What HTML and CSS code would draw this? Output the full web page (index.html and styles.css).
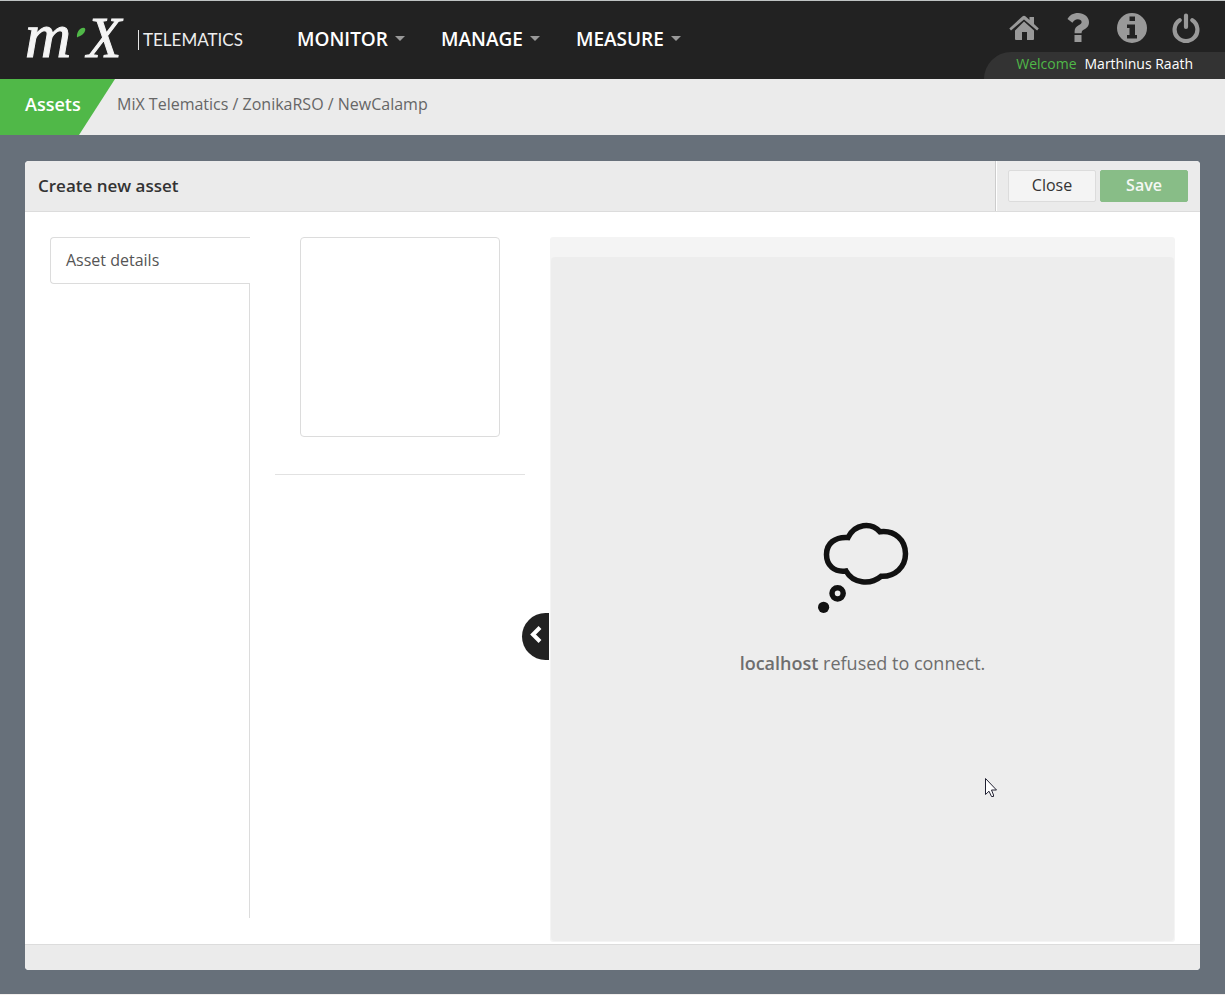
FILE: index.html
```html
<!DOCTYPE html>
<html lang="en">
<head>
<meta charset="utf-8">
<title>Create new asset</title>
<link rel="stylesheet" href="styles.css">
</head>
<body>
<header class="topbar">
  <a class="logo" href="#" aria-label="MiX Telematics">
    <svg class="logo-mark" viewBox="0 0 98 42" width="98" height="42">
      <text class="logo-m" x="0" y="38">m</text>
      <path class="logo-leaf" d="M52 18.500C51.500 14 54 9 58.500 8.800C61.500 9 60.500 13 57.500 15.500C55.500 17 53.500 17.500 52 18.500Z"/>
      <text class="logo-x" x="62" y="38">X</text>
    </svg>
    <span class="logo-name">TELEMATICS</span>
  </a>
  <nav class="menu">
    <button class="menu-item" type="button">MONITOR<span class="caret"></span></button>
    <button class="menu-item" type="button">MANAGE<span class="caret"></span></button>
    <button class="menu-item" type="button">MEASURE<span class="caret"></span></button>
  </nav>
  <div class="account">
    <div class="tools">
      <a href="#" aria-label="Home"><svg viewBox="0 0 30 30" width="30" height="30"><path d="M15 8.500L25 17.500V26q0 1-1 1h-6v-8h-5v8H7q-1 0-1-1V17.500z"/><path d="M13.300 3.600Q15 2 16.700 3.600L20.500 7V4h4.500v7l4.800 4.500-1.700 2L15 6.400 2 17.500.3 15.500z"/></svg></a>
      <a href="#" aria-label="Help"><svg viewBox="0 0 30 30" width="30" height="30"><path d="M11.500 22h7v7h-7zM4.500 6C6.500 2.200 10 0 15.200 0 20.700 0 26 3.800 26 9c0 4-2 5.900-5 7.600-1.800 1-2.400 1.700-2.400 3.600h-7v-1.600c0-3.200 1.400-4.900 4-6.300 2-1.100 3-1.700 3-3.200 0-1.900-1.800-2.800-3.800-2.800-2.600 0-3.800 1.400-5.400 3.400z"/></svg></a>
      <a href="#" aria-label="Information"><svg viewBox="0 0 30 30" width="30" height="30"><path fill-rule="evenodd" d="M15 0a15 15 0 1 1 0 30a15 15 0 0 1 0-30zM12.500 3.500v4.500h5.500v-4.500zM10 11.500v3.500h2.500v7H10V25.500h10V22h-2V11.500z"/></svg></a>
      <a href="#" aria-label="Log out"><svg viewBox="0 0 30 30" width="30" height="30"><g fill="none" stroke="currentColor" stroke-width="4.200" stroke-linecap="round"><path d="M8.700 7.200A11.400 11.400 0 1 0 21.300 7.200M15 2.500V14"/></g></svg></a>
    </div>
    <div class="welcome"><span class="greeting">Welcome</span><span>Marthinus Raath</span></div>
  </div>
</header>
<div class="crumbs">
  <h1 class="section">Assets</h1>
  <p class="path">MiX Telematics / ZonikaRSO / NewCalamp</p>
</div>
<main class="page">
  <section class="card">
    <div class="card-head">
      <h2 class="card-title">Create new asset</h2>
      <div class="actions">
        <button class="btn" type="button">Close</button>
        <button class="btn btn-save" type="button">Save</button>
      </div>
    </div>
    <div class="card-body">
      <nav class="tabs"><a class="tab" href="#">Asset details</a></nav>
      <div class="summary">
        <div class="photo"></div>
        <hr class="rule">
      </div>
      <div class="frame">
        <button class="collapse" type="button" aria-label="Collapse"><svg viewBox="0 0 14 20" width="14" height="20"><path d="M12 2.500L5 9.500l7 7" fill="none" stroke="#fff" stroke-width="4"/></svg></button>
        <div class="frame-view">
          <svg class="cloud" viewBox="0 0 96 96" width="96" height="96">
            <g fill="none" stroke="#111" stroke-width="5.500">
              <path d="M33 16.500C40 2.500 56 1 65 10.800C80 9 90.500 19 90.500 32.800C90.500 46 80 56 66 55.300C55 64.500 38 62.500 31 50C19 51.500 11.500 44 11.500 33.500C11.500 22.500 20 15.500 33 16.500Z"/>
              <circle cx="22.600" cy="72.300" r="5.600"/>
            </g>
            <circle cx="8.600" cy="86.300" r="5.600" fill="#111"/>
          </svg>
          <p class="message"><strong>localhost</strong> refused to connect.</p>
        </div>
      </div>
    </div>
    <div class="card-foot"></div>
  </section>
</main>
<svg class="pointer" viewBox="0 0 12 20" width="12" height="20"><path d="M.5.500V16.500L4 13.200 6.500 18.500H8.500V17L6.500 12H11.500Z" fill="#fff" stroke="#223"/></svg>
</body>
</html>
```
FILE: styles.css
```css
* { box-sizing: border-box; }

body {
  margin: 0;
  min-height: 100vh;
  display: flex;
  flex-direction: column;
  background: #67707a;
  border-top: 1px solid #bfc3c3;
  border-bottom: 1px solid #f4f0ee;
  font-family: "Open Sans", "Noto Sans", sans-serif;
  font-size: 16px;
  color: #333;
}

a { color: inherit; text-decoration: none; }
h1, h2, p { margin: 0; }
button { font: inherit; color: inherit; cursor: pointer; }
svg { display: block; }

.topbar {
  display: flex;
  height: 78px;
  background: #222;
  color: #fff;
}

.logo {
  display: flex;
  align-items: center;
  gap: 15px;
  width: 297px;
  padding-left: 25px;
}
.logo-mark { fill: #f4f4f4; overflow: visible; }
.logo-m,
.logo-x { stroke: #f4f4f4; stroke-width: 1px; }
.logo-m { font: italic 64px "Liberation Serif", serif; }
.logo-x { font: italic 56px "Liberation Serif", serif; }
.logo-leaf { fill: #50b848; }
.logo-name {
  padding-left: 4px;
  border-left: 1px solid #e4e4e4;
  font: 17px/20px Lato, sans-serif;
  color: #eee;
}

.menu { display: flex; align-items: center; gap: 36px; padding-bottom: 3px; }
.menu-item {
  display: flex;
  align-items: center;
  gap: 7px;
  padding: 0;
  border: 0;
  background: none;
  font-size: 19px;
  font-weight: 600;
}
.caret {
  border: 5px solid transparent;
  border-top-color: #999;
  border-bottom: 0;
}

.account {
  display: flex;
  flex-direction: column;
  justify-content: space-between;
  margin-left: auto;
}
.tools {
  display: flex;
  justify-content: flex-end;
  gap: 24px;
  padding: 12px 24px 0 0;
  color: #999;
}
.tools svg { fill: currentColor; }
.welcome {
  display: flex;
  gap: 8px;
  height: 27px;
  padding: 0 32px;
  border-top-left-radius: 27px;
  background: #333;
  font-size: 14px;
  line-height: 24px;
}
.greeting { color: #50b848; }

.crumbs { display: flex; height: 56px; background: #ebebeb; line-height: 50px; }
.section {
  width: 115px;
  padding-left: 25px;
  background: #50b848;
  clip-path: polygon(0 0, 100% 0, 79px 100%, 0 100%);
  color: #fff;
  font-size: 18px;
  font-weight: 600;
}
.path { padding-left: 2px; color: #666; }

.page { flex: 1; display: flex; padding: 26px 25px 24px; }
.card {
  flex: 1;
  display: flex;
  flex-direction: column;
  border-radius: 4px;
  overflow: hidden;
  background: #fff;
}
.card-head {
  display: flex;
  justify-content: space-between;
  height: 51px;
  border-bottom: 1px solid #dcdcdc;
  background: #ebebeb;
}
.card-title { padding-left: 13px; font-size: 17px; font-weight: 600; line-height: 50px; }
.actions {
  display: flex;
  gap: 4px;
  padding: 9px 12px;
  border-left: 1px solid #ccc;
  box-shadow: inset 1px 0 #fff;
}
.btn {
  width: 88px;
  height: 32px;
  padding: 0 0 2px;
  border: 1px solid #dcdcdc;
  border-radius: 2px;
  background: #f4f4f4;
}
.btn-save { border-color: #88bd87; background: #88bd87; color: #f4f8f4; font-weight: 600; }

.card-body {
  flex: 1;
  display: grid;
  grid-template-columns: 200px 250px 1fr;
  gap: 25px;
  padding: 25px 25px 2px;
}
.card-foot { height: 26px; border-top: 1px solid #dcdcdc; background: #ebebeb; }
.tabs { display: flex; flex-direction: column; margin-bottom: 24px; }
.tabs::after { content: ""; flex: 1; border-right: 1px solid #dcdcdc; }
.tab {
  height: 47px;
  padding-left: 15px;
  border: 1px solid #dcdcdc;
  border-right: 0;
  border-radius: 4px 0 0 4px;
  color: #555;
  line-height: 44px;
}
.photo {
  height: 200px;
  margin: 0 25px 37px;
  border: 1px solid #dcdcdc;
  border-radius: 4px;
}
.rule { margin: 0; border: 0; border-top: 1px solid #e2e2e2; }

.frame {
  position: relative;
  display: flex;
  padding: 20px 1px 1px;
  border-radius: 3px;
  background: #f4f4f4;
}
.frame-view {
  flex: 1;
  display: flex;
  flex-direction: column;
  align-items: center;
  justify-content: center;
  gap: 32px;
  border-radius: 4px;
  background: #ededed;
}
.message { font-size: 18px; line-height: 28px; color: #6e6e6e; }
.message strong { font-weight: 600; }
.collapse {
  position: absolute;
  right: calc(100% + 1px);
  top: 376px;
  width: 27px;
  height: 47px;
  padding: 0 0 4px 6px;
  border: 0;
  border-radius: 24px 0 0 24px;
  background: #222;
}

.pointer { position: absolute; left: 985px; top: 778px; }
```
